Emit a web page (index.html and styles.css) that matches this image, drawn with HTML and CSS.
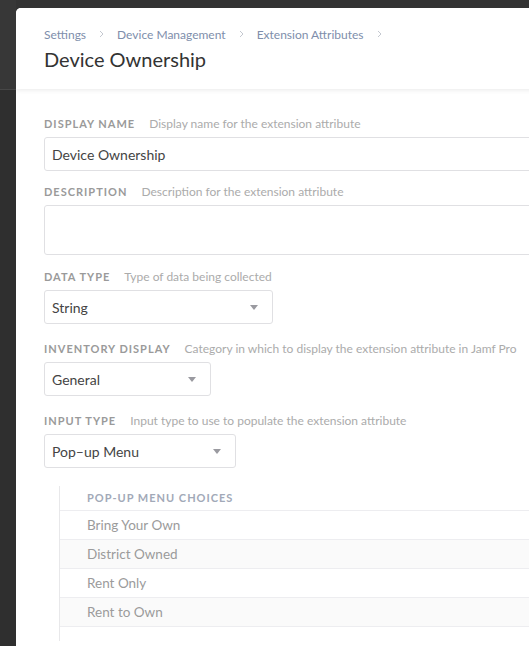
FILE: index.html
```html
<!DOCTYPE html>
<html>
<head>
<meta charset="utf-8">
<link rel="stylesheet" href="styles.css">
</head>
<body>
<div class="app">
  <div class="rail"><div class="rail-top"></div></div>
  <div class="main">
    <div class="card">
      <header class="head">
        <nav class="crumbs">
          <span class="crumb">Settings</span>
          <svg class="chev" width="5" height="8" viewBox="0 0 5 8"><path d="M1 1l3 3-3 3" fill="none" stroke="#c4c8d0" stroke-width="1"/></svg>
          <span class="crumb">Device Management</span>
          <svg class="chev" width="5" height="8" viewBox="0 0 5 8"><path d="M1 1l3 3-3 3" fill="none" stroke="#c4c8d0" stroke-width="1"/></svg>
          <span class="crumb">Extension Attributes</span>
          <svg class="chev" width="5" height="8" viewBox="0 0 5 8"><path d="M1 1l3 3-3 3" fill="none" stroke="#c4c8d0" stroke-width="1"/></svg>
        </nav>
        <h1 class="title">Device Ownership</h1>
      </header>
      <div class="form">
        <div class="field field-name">
          <div class="label"><span class="name">Display Name</span><span class="hint">Display name for the extension attribute</span></div>
          <div class="input">Device Ownership</div>
        </div>
        <div class="field field-desc">
          <div class="label"><span class="name">Description</span><span class="hint">Description for the extension attribute</span></div>
          <div class="input textarea"></div>
        </div>
        <div class="field">
          <div class="label"><span class="name">Data Type</span><span class="hint">Type of data being collected</span></div>
          <div class="select w-data"><span>String</span><span class="caret"></span></div>
        </div>
        <div class="field">
          <div class="label"><span class="name">Inventory Display</span><span class="hint">Category in which to display the extension attribute in Jamf Pro</span></div>
          <div class="select w-inv"><span>General</span><span class="caret"></span></div>
        </div>
        <div class="field field-last">
          <div class="label"><span class="name">Input Type</span><span class="hint">Input type to use to populate the extension attribute</span></div>
          <div class="select w-input"><span>Pop–up Menu</span><span class="caret"></span></div>
        </div>
        <div class="choices">
          <div class="choices-head">Pop-up Menu Choices</div>
          <div class="row">Bring Your Own</div>
          <div class="row alt">District Owned</div>
          <div class="row">Rent Only</div>
          <div class="row alt">Rent to Own</div>
        </div>
      </div>
    </div>
  </div>
</div>
</body>
</html>
```
FILE: styles.css
```css
html, body {
  margin: 0;
  padding: 0;
  height: 100%;
  overflow: hidden;
  background: #333333;
  font-family: Lato, "Open Sans", Arial, sans-serif;
}
.app {
  display: flex;
  height: 646px;
  width: 720px;
}
.rail {
  width: 16px;
  flex: none;
  background: #2f2f2f;
}
.rail-top {
  height: 89px;
  background: #373737;
  border-bottom: 1px solid #474747;
}
.main {
  flex: 1;
  padding-top: 8px;
}
.card {
  background: #ffffff;
  border-top-left-radius: 5px;
  height: 100%;
  overflow: hidden;
}
.head {
  height: 81px;
  box-sizing: border-box;
  padding: 18px 28px 0;
  background: #fff;
  box-shadow: 0 1px 5px rgba(0,0,0,0.09);
  position: relative;
}
.crumbs {
  display: flex;
  align-items: center;
  height: 16px;
  font-size: 12px;
  color: #7e8eab;
}
.chev {
  margin: 0 13px;
}
.title {
  margin: 4px 0 0;
  font-size: 20px;
  font-weight: 400;
  color: #333;
  line-height: 26px;
}
.form {
  padding: 28px 0 0 28px;
}
.field {
  margin-bottom: 18px;
}
.field-name {
  margin-bottom: 14px;
}
.field-desc {
  margin-bottom: 15px;
}
.label {
  display: flex;
  align-items: baseline;
  height: 14px;
  line-height: 14px;
  margin-bottom: 6px;
  white-space: nowrap;
}
.name {
  font-size: 11px;
  font-weight: 700;
  text-transform: uppercase;
  letter-spacing: 1px;
  color: #9a9a9a;
  margin-right: 14px;
}
.hint {
  font-size: 12px;
  color: #ababab;
}
.input, .select {
  box-sizing: border-box;
  height: 34px;
  border: 1px solid #e0e0e3;
  border-radius: 3px;
  background: #fff;
  font-size: 14px;
  color: #444;
  padding: 0 7px;
  display: flex;
  align-items: center;
}
.input {
  width: 640px;
}
.textarea {
  height: 50px;
}
.select {
  justify-content: space-between;
  padding-right: 14px;
}
.w-data { width: 229px; }
.w-inv { width: 167px; }
.w-input { width: 192px; }
.caret {
  width: 0;
  height: 0;
  border-left: 4px solid transparent;
  border-right: 4px solid transparent;
  border-top: 5px solid #9a9aa0;
}
.choices {
  margin-left: 15px;
  border-left: 1px solid #e8e8ea;
  padding-bottom: 14px;
  width: 640px;
}
.choices-head {
  height: 25px;
  box-sizing: border-box;
  padding-left: 27px;
  padding-top: 5px;
  font-size: 11px;
  font-weight: 700;
  letter-spacing: 1px;
  text-transform: uppercase;
  color: #a2a9b8;
  border-bottom: 1px solid #ededf0;
}
.row {
  height: 29px;
  box-sizing: border-box;
  padding-left: 27px;
  display: flex;
  align-items: center;
  font-size: 13.5px;
  color: #9b9b9b;
  border-bottom: 1px solid #ededf0;
}
.alt {
  background: #fafafa;
}
```
